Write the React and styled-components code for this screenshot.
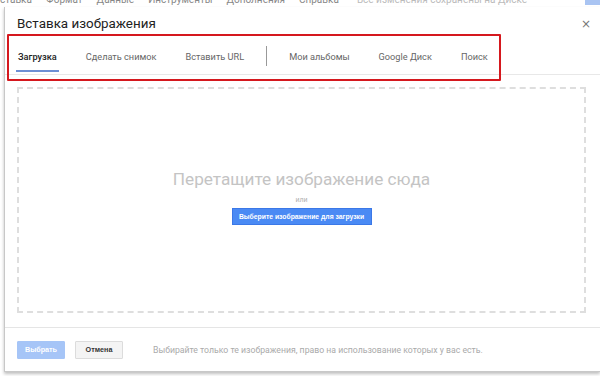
import React from "react";
import styled, { createGlobalStyle } from "styled-components";

const GlobalStyle = createGlobalStyle`
  html, body {
    margin: 0;
    padding: 0;
    background: #fff;
  }
  body {
    font-family: Roboto, "Liberation Sans", Arial, sans-serif;
  }
`;

const Page = styled.div`
  width: 600px;
  height: 376px;
  overflow: hidden;
  display: flex;
  flex-direction: column;
  background: #fff;
`;

const MenuStrip = styled.div`
  height: 7px;
  overflow: hidden;
  display: flex;
  justify-content: space-between;
  flex-shrink: 0;
`;

const MenuItems = styled.div`
  display: flex;
  gap: 14px;
  margin-top: -6px;
  font-size: 10px;
  line-height: 12px;
  color: #888;
  white-space: nowrap;
`;

const Saved = styled.span`
  color: #bbb;
  margin-left: 4px;
`;

const ShareChip = styled.div`
  width: 15px;
  height: 5px;
  background: #a9c4f2;
`;

const Dialog = styled.div`
  margin-left: 4px;
  height: 364px;
  background: #fff;
  border-left: 1px solid #c8c8c8;
  border-bottom: 1px solid #c8c8c8;
  box-shadow: 0 2px 3px rgba(0, 0, 0, 0.25);
  display: flex;
  flex-direction: column;
`;

const Header = styled.div`
  display: flex;
  align-items: center;
  justify-content: space-between;
  padding: 6px 9px 0 12px;
  height: 21px;
`;

const Title = styled.div`
  font-size: 13.4px;
  color: #222;
`;

const Close = styled.div`
  font-size: 12px;
  color: #777;
  font-family: "DejaVu Sans", sans-serif;
`;

const TabBar = styled.div`
  position: relative;
  display: flex;
  align-items: stretch;
  height: 34px;
  margin-top: 6px;
  padding-left: 11px;
  border-bottom: 1px solid #e8e8e8;
`;

const Tab = styled.div`
  display: flex;
  align-items: center;
  padding: 2px 2px 0 2px;
  margin-right: ${(p) => p.$gap ?? 25}px;
  font-size: 9.2px;
  color: ${(p) => (p.$active ? "#222" : "#666")};
  font-weight: ${(p) => (p.$active ? 500 : 400)};
  border-bottom: 2px solid ${(p) => (p.$active ? "#6d8fd4" : "transparent")};
  margin-bottom: 2px;
`;

const TabDivider = styled.div`
  width: 1px;
  background: #999;
  margin: 6px 20px 8px 0;
`;

const Highlight = styled.div`
  position: absolute;
  left: 2px;
  top: -6px;
  width: 494px;
  height: 47px;
  border: 2.5px solid #d5181e;
  border-radius: 1px;
  box-sizing: border-box;
  pointer-events: none;
`;

const Body = styled.div`
  flex: 1;
  padding: 12px 14px 0 12px;
`;

const DropZone = styled.div`
  height: 226px;
  box-sizing: border-box;
  border: 2px dashed #dedede;
  display: flex;
  flex-direction: column;
  align-items: center;
  padding-top: 80px;
`;

const DropTitle = styled.div`
  font-size: 17.2px;
  color: #c4c4c4;
`;

const Or = styled.div`
  margin-top: 7px;
  font-size: 7px;
  color: #b0b0b0;
`;

const PickButton = styled.div`
  margin-top: 4px;
  width: 140px;
  height: 17px;
  background: #4a8af4;
  border: 1px solid #3b78e7;
  box-sizing: border-box;
  color: #fff;
  font-family: "Liberation Sans", Arial, sans-serif;
  font-weight: bold;
  font-size: 6.8px;
  display: flex;
  align-items: center;
  justify-content: center;
  white-space: nowrap;
`;

const Footer = styled.div`
  border-top: 1px solid #e5e5e5;
  margin-top: 12px;
  height: 43px;
  display: flex;
  align-items: center;
  padding: 0 12px;
  gap: 10px;
`;

const Button = styled.div`
  width: 48px;
  height: 18px;
  box-sizing: border-box;
  display: flex;
  align-items: center;
  justify-content: center;
  font-family: "Liberation Sans", Arial, sans-serif;
  font-weight: bold;
  font-size: 7.2px;
  background: ${(p) => (p.$primary ? "#a6c5f7" : "#f4f4f4")};
  color: ${(p) => (p.$primary ? "#fff" : "#333")};
  border: 1px solid ${(p) => (p.$primary ? "#a6c5f7" : "#dcdcdc")};
  border-radius: 1px;
`;

const Hint = styled.div`
  margin-left: 20px;
  font-size: 8.7px;
  color: #aaa;
  white-space: nowrap;
`;

const tabs = [
  { label: "Загрузка", active: true },
  { label: "Сделать снимок" },
  { label: "Вставить URL", gap: 20, divider: true },
  { label: "Мои альбомы" },
  { label: "Google Диск" },
  { label: "Поиск", gap: 0 },
];

export default function App() {
  return (
    <>
      <GlobalStyle />
      <Page>
        <MenuStrip>
          <MenuItems>
            <span>ставка</span>
            <span>Формат</span>
            <span>Данные</span>
            <span>Инструменты</span>
            <span>Дополнения</span>
            <span>Справка</span>
            <Saved>Все изменения сохранены на Диске</Saved>
          </MenuItems>
          <ShareChip />
        </MenuStrip>
        <Dialog>
          <Header>
            <Title>Вставка изображения</Title>
            <Close>×</Close>
          </Header>
          <TabBar>
            {tabs.map((t) => (
              <React.Fragment key={t.label}>
                <Tab $active={t.active} $gap={t.gap}>
                  {t.label}
                </Tab>
                {t.divider && <TabDivider />}
              </React.Fragment>
            ))}
            <Highlight />
          </TabBar>
          <Body>
            <DropZone>
              <DropTitle>Перетащите изображение сюда</DropTitle>
              <Or>или</Or>
              <PickButton>Выберите изображение для загрузки</PickButton>
            </DropZone>
          </Body>
          <Footer>
            <Button $primary>Выбрать</Button>
            <Button>Отмена</Button>
            <Hint>
              Выбирайте только те изображения, право на использование которых у
              вас есть.
            </Hint>
          </Footer>
        </Dialog>
      </Page>
    </>
  );
}
